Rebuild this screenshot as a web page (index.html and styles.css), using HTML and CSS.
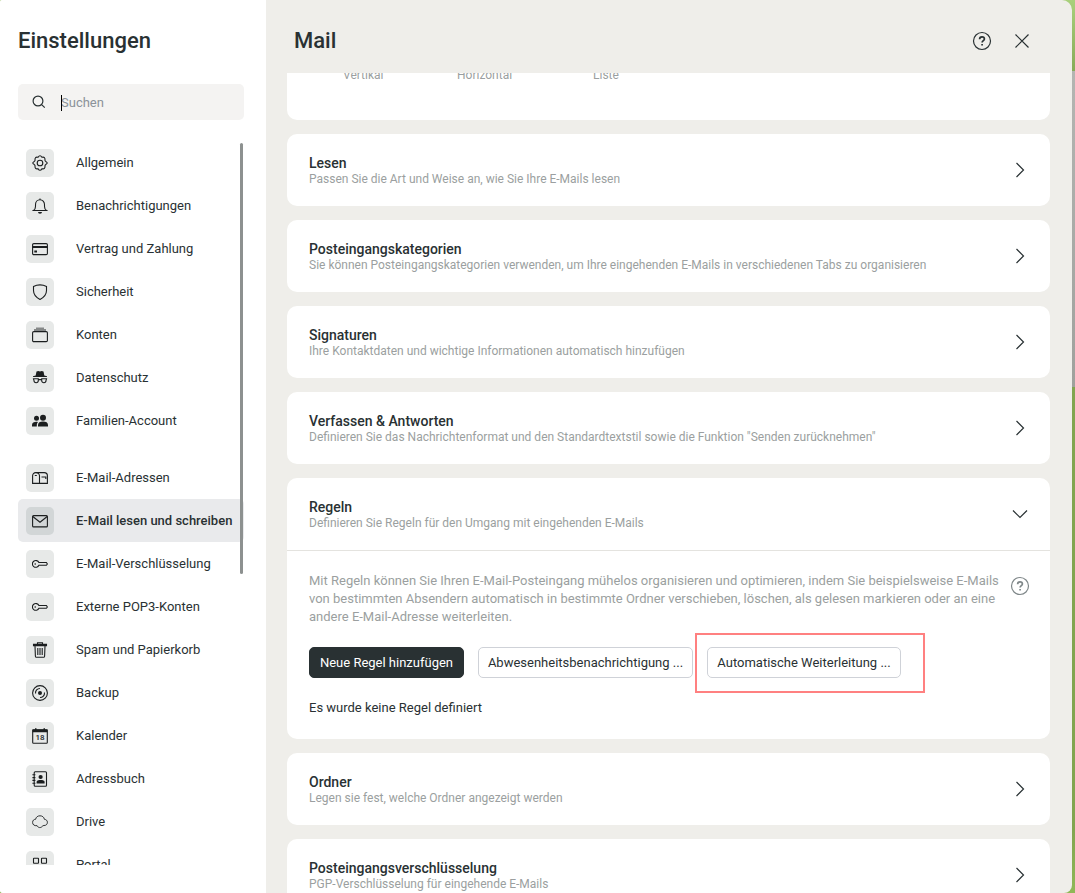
FILE: index.html
```html
<!DOCTYPE html>
<html lang="de">
<head>
    <meta charset="UTF-8">
    <meta name="viewport" content="width=device-width, initial-scale=1.0">
    <title>Einstellungen - Mail</title>
    <link rel="stylesheet" href="styles.css">
</head>
<body>
    <div class="dialog">
        <aside class="sidebar">
            <h1>Einstellungen</h1>
            <div class="search">
                <svg width="14" height="14" viewBox="0 0 14 14"><circle cx="6" cy="6" r="4.900"/><path d="M9.600 9.600l3.200 3"/></svg>
                <span class="caret"></span>
                <input type="text" id="search" placeholder="Suchen" aria-label="Suchen">
            </div>
            <div class="nav-wrap">
                <nav class="nav">
                    <ul>
                        <li><a href="#allgemein"><span class="icon"><svg viewBox="0 0 16 16"><circle cx="8" cy="8" r="2.800"/><path d="M6 2.300Q8-.9 10 2.300q3.300-.8 3 3-.1.400.7 1.100 3 1.600 0 3.200-.8.700-.7 1.100.300 3.800-3 3-2 3.200-4 0-3.300.8-3-3 .1-.4-.7-1.100-3-1.600 0-3.200.8-.7.700-1.100-.300-3.800 3-3z"/></svg></span>Allgemein</a></li>
                        <li><a href="#benachrichtigungen"><span class="icon"><svg viewBox="0 0 16 16"><path d="M1.500 12.500h13c-1.500-1-2-2-2-4V6.500a4.500 4.800 0 0 0-9 0v2c0 2-.5 3-2 4zM8 .5V2"/><path class="fill" d="M6 14h4a2 1.800 0 0 1-4 0z"/></svg></span>Benachrichtigungen</a></li>
                        <li><a href="#vertrag"><span class="icon"><svg viewBox="0 0 16 16"><rect x=".6" y="2.600" width="14.800" height="11" rx="1.200"/><path class="fill" d="M.6 5h14.800v2H.6zM2.300 9.500h2.700v2H2.300z"/></svg></span>Vertrag und Zahlung</a></li>
                        <li><a href="#sicherheit"><span class="icon"><svg viewBox="0 0 16 16"><path d="M8 .9c2.500 0 4.500.5 6.500 1.500v4.100c0 4-2.800 7-6.500 8.900C4.300 13.500 1.500 10.500 1.500 6.500V2.400C3.500 1.400 5.500.9 8 .9z"/></svg></span>Sicherheit</a></li>
                        <li><a href="#konten"><span class="icon"><svg viewBox="0 0 16 16"><path class="soft" d="M4 .5h8V2h2v2.500H2V2h2z"/><rect x=".6" y="4.600" width="14.800" height="10" rx="1.200"/></svg></span>Konten</a></li>
                        <li><a href="#datenschutz"><span class="icon"><svg viewBox="0 0 16 16"><path class="fill" d="M4.500 1.500L6.400 1l1.600.4L9.600 1l1.900.5.8 3.900 2.700.8V7H1v-.8l2.700-.8z"/><path d="M1.500 8.800h4.800v1.700c0 3-4.300 3-4.300 0zM9.700 8.800h4.800l-.5 1.700c0 3-4.300 3-4.300 0zM6.300 9.600h3.400"/></svg></span>Datenschutz</a></li>
                        <li><a href="#familie"><span class="icon"><svg viewBox="0 0 16 16"><g class="fill"><circle cx="4.500" cy="5.200" r="2.500"/><circle cx="11" cy="4.700" r="3"/><path d="M0 13.500V12c0-2.300 2-3.300 4.500-3.300l1.800.3c-1.200.8-1.500 1.500-1.500 4.500zM6 13.500V12c0-2.300 2-3.400 5-3.400s5 1.100 5 3.400v1.500z"/></g></svg></span>Familien-Account</a></li>
                    </ul>
                    <ul>
                        <li><a href="#adressen"><span class="icon"><svg viewBox="0 0 16 16"><path d="M3.800 2.600h8.400c2 0 3.200 1.500 3.200 3.200v7.600H.6V5.800c0-1.700 1.200-3.200 3.200-3.200s3.700 1.500 3.700 3.200v7.600M2.800 5.500h2M9.500 7h4.300v2"/></svg></span>E-Mail-Adressen</a></li>
                        <li><a href="#schreiben" class="active"><span class="icon"><svg viewBox="0 0 16 16"><rect x=".6" y="2.600" width="14.800" height="11.300" rx="1"/><path d="M.8 3.500L8 9.300l7.200-5.800"/></svg></span>E-Mail lesen und schreiben</a></li>
                        <li><a href="#verschluesselung"><span class="icon"><svg viewBox="0 0 16 16"><path d="M6.900 6.500h7.500l1 1.500-1 1.300H6.900a3.400 3.400 0 1 1 0-2.800z"/><circle class="fill" cx="3.200" cy="8" r=".8"/></svg></span>E-Mail-Verschlüsselung</a></li>
                        <li><a href="#pop3"><span class="icon"><svg viewBox="0 0 16 16"><path d="M6.900 6.500h7.500l1 1.500-1 1.300H6.900a3.400 3.400 0 1 1 0-2.800z"/><circle class="fill" cx="3.200" cy="8" r=".8"/></svg></span>Externe POP3-Konten</a></li>
                        <li><a href="#spam"><span class="icon"><svg viewBox="0 0 16 16"><path d="M1.500 3.600V2.400h13v1.200zM5.500 2V.7h5V2M3 4l.4 10.200q.1 1.100 1 1.100h7.200q.9 0 1-1.100L13 4M5.800 6v7M8 6v7M10.200 6v7"/></svg></span>Spam und Papierkorb</a></li>
                        <li><a href="#backup"><span class="icon"><svg viewBox="0 0 16 16"><circle cx="8" cy="8" r="7.400"/><circle class="fill" cx="8" cy="8" r="2"/><path d="M3.500 8.500A4.500 4.500 0 0 1 8 3.500M12.500 7.500a4.500 4.500 0 0 1-4.500 5"/></svg></span>Backup</a></li>
                        <li><a href="#kalender"><span class="icon"><svg viewBox="0 0 16 16"><rect x=".7" y="1.700" width="14.600" height="13.600" rx=".8"/><path class="fill" d="M.5 1.500h15v2.700H.5zM3 .3h1.500v1.500H3zM11.500.3H13v1.500h-1.500z"/><text x="8" y="12.200" text-anchor="middle">18</text></svg></span>Kalender</a></li>
                        <li><a href="#adressbuch"><span class="icon"><svg viewBox="0 0 16 16"><rect x="2.200" y=".7" width="12.300" height="14.600" rx="1"/><path d="M.4 3.800h3M.4 6.600h3M.4 9.400h3M.4 12.200h3"/><g class="fill"><circle cx="8.600" cy="6" r="2.100"/><path d="M4.600 12.500V11c0-1.500 1.800-2 4-2s4 .5 4 2v1.500z"/></g></svg></span>Adressbuch</a></li>
                        <li><a href="#drive"><span class="icon"><svg viewBox="0 0 16 16"><path class="thin" d="M3.600 5.300C4 3 5.800 1.800 8 1.800s4 1.200 4.400 3.500c1.900.2 3 1.400 3 3 0 2-1.400 3.300-3.400 3.200-.8 0-1.200.2-1.700.8-1.500 1.900-4.300 1.600-5.200-.6C2.200 12 .6 10.600.6 8.500s1.200-3.200 3-3.200z"/></svg></span>Drive</a></li>
                        <li><a href="#portal"><span class="icon"><svg viewBox="0 0 16 16"><rect x="1.500" y="1.200" width="5" height="5" rx=".5"/><rect x="9.500" y="1.200" width="5" height="5" rx=".5"/><rect x="1.500" y="9.200" width="5" height="5" rx=".5"/><rect x="9.500" y="9.200" width="5" height="5" rx=".5"/></svg></span>Portal</a></li>
                    </ul>
                </nav>
                <div class="thumb"></div>
            </div>
        </aside>

        <main class="main">
            <header class="header">
                <h2>Mail</h2>
                <button type="button" class="icon-button" aria-label="Hilfe"><svg width="20" height="20" viewBox="0 0 20 20"><circle cx="10" cy="10" r="8.500"/><path class="mark" d="M7.600 8.200c0-1.500 1-2.400 2.400-2.400s2.400.9 2.400 2.200c0 1.600-2.300 1.700-2.300 3.500M10.100 13v1.600"/></svg></button>
                <button type="button" class="icon-button" aria-label="Schließen"><svg width="20" height="20" viewBox="0 0 20 20"><path d="M3.500 3.500l13 13M16.500 3.500l-13 13"/></svg></button>
            </header>
            <div class="content">
                <section class="card views">
                    <span>Vertikal</span>
                    <span>Horizontal</span>
                    <span>Liste</span>
                </section>
                <section class="card">
                    <button type="button" class="card-head">
                        <span class="card-text"><strong>Lesen</strong><small>Passen Sie die Art und Weise an, wie Sie Ihre E-Mails lesen</small></span>
                        <svg width="20" height="20" viewBox="0 0 20 20"><path d="M6.500 3l7 7-7 7"/></svg>
                    </button>
                </section>
                <section class="card">
                    <button type="button" class="card-head">
                        <span class="card-text"><strong>Posteingangskategorien</strong><small>Sie können Posteingangskategorien verwenden, um Ihre eingehenden E-Mails in verschiedenen Tabs zu organisieren</small></span>
                        <svg width="20" height="20" viewBox="0 0 20 20"><path d="M6.500 3l7 7-7 7"/></svg>
                    </button>
                </section>
                <section class="card">
                    <button type="button" class="card-head">
                        <span class="card-text"><strong>Signaturen</strong><small>Ihre Kontaktdaten und wichtige Informationen automatisch hinzufügen</small></span>
                        <svg width="20" height="20" viewBox="0 0 20 20"><path d="M6.500 3l7 7-7 7"/></svg>
                    </button>
                </section>
                <section class="card">
                    <button type="button" class="card-head">
                        <span class="card-text"><strong>Verfassen &amp; Antworten</strong><small>Definieren Sie das Nachrichtenformat und den Standardtextstil sowie die Funktion "Senden zurücknehmen"</small></span>
                        <svg width="20" height="20" viewBox="0 0 20 20"><path d="M6.500 3l7 7-7 7"/></svg>
                    </button>
                </section>
                <section class="card">
                    <button type="button" class="card-head" aria-expanded="true">
                        <span class="card-text"><strong>Regeln</strong><small>Definieren Sie Regeln für den Umgang mit eingehenden E-Mails</small></span>
                        <svg width="20" height="20" viewBox="0 0 20 20"><path d="M3 6.500l7 7 7-7"/></svg>
                    </button>
                    <div class="card-body">
                        <div class="intro">
                            <p>Mit Regeln können Sie Ihren E-Mail-Posteingang mühelos organisieren und optimieren, indem Sie beispielsweise E-Mails von bestimmten Absendern automatisch in bestimmte Ordner verschieben, löschen, als gelesen markieren oder an eine andere E-Mail-Adresse weiterleiten.</p>
                            <button type="button" class="icon-button muted" aria-label="Hilfe zu Regeln"><svg width="20" height="20" viewBox="0 0 20 20"><circle cx="10" cy="10" r="8.500"/><path class="mark" d="M7.600 8.200c0-1.500 1-2.400 2.400-2.400s2.400.9 2.400 2.200c0 1.600-2.300 1.700-2.300 3.500M10.100 13v1.600"/></svg></button>
                        </div>
                        <div class="actions">
                            <button type="button" class="btn primary">Neue Regel hinzufügen</button>
                            <button type="button" class="btn wide">Abwesenheitsbenachrichtigung ...</button>
                            <div class="marked">
                                <button type="button" class="btn medium">Automatische Weiterleitung ...</button>
                            </div>
                        </div>
                        <p class="empty">Es wurde keine Regel definiert</p>
                    </div>
                </section>
                <section class="card">
                    <button type="button" class="card-head">
                        <span class="card-text"><strong>Ordner</strong><small>Legen sie fest, welche Ordner angezeigt werden</small></span>
                        <svg width="20" height="20" viewBox="0 0 20 20"><path d="M6.500 3l7 7-7 7"/></svg>
                    </button>
                </section>
                <section class="card">
                    <button type="button" class="card-head">
                        <span class="card-text"><strong>Posteingangsverschlüsselung</strong><small>PGP-Verschlüsselung für eingehende E-Mails</small></span>
                        <svg width="20" height="20" viewBox="0 0 20 20"><path d="M6.500 3l7 7-7 7"/></svg>
                    </button>
                </section>
            </div>
        </main>
    </div>
</body>
</html>
```
FILE: styles.css
```css
* {
    box-sizing: border-box;
}
body {
    margin: 0;
    height: 100vh;
    overflow: hidden;
    padding-right: 3px;
    font-family: Roboto, "Liberation Sans", sans-serif;
    font-size: 13px;
    color: #293133;
    background: linear-gradient(#a9d07c, #88ab59 71px, #b4b5b2 71px, #9fa19d 387px, #82a550 387px, #82a550 830px, #8fb857);
}
h1, h2, p, ul {
    margin: 0;
    padding: 0;
}
h1, h2 {
    font-size: 22px;
    line-height: 28px;
    font-weight: 500;
}
button, input {
    font: inherit;
    color: inherit;
}
button {
    cursor: pointer;
}
svg {
    display: block;
    flex: none;
    fill: none;
    stroke: #293133;
    stroke-width: 1.2;
}
.dialog {
    display: flex;
    height: 100%;
    overflow: hidden;
    border-radius: 2px 10px 8px 3px;
    background: #efeeea;
}

/* Seitenleiste */
.sidebar {
    display: flex;
    flex-direction: column;
    flex: none;
    width: 266px;
    padding: 27px 22px 28px 18px;
    background: #fff;
}
.search {
    position: relative;
    display: flex;
    align-items: center;
    gap: 15px;
    flex: none;
    height: 36px;
    margin: 29px 0 21px;
    padding-left: 14px;
    border-radius: 5px;
    background: #f4f3f2;
}
.search input {
    width: 100%;
    min-width: 0;
    height: 36px;
    padding: 0;
    border: none;
    outline: none;
    background: none;
}
.search input::placeholder {
    color: #8b9299;
}
.search .caret {
    position: absolute;
    top: 11px;
    left: 43px;
    width: 1px;
    height: 16px;
    background: #000;
}
.nav-wrap {
    position: relative;
    flex: 1;
    min-height: 0;
}
.nav {
    height: 100%;
    overflow: hidden;
}
.nav ul {
    list-style: none;
}
.nav ul + ul {
    margin-top: 14px;
}
.nav a {
    display: flex;
    gap: 22px;
    padding: 8px 8px 7px;
    border-radius: 5px;
    line-height: 28px;
    white-space: nowrap;
    color: inherit;
    text-decoration: none;
}
.nav a.active {
    background: #e9eaec;
    font-weight: 500;
}
.icon {
    display: flex;
    align-items: center;
    justify-content: center;
    flex: none;
    width: 28px;
    height: 28px;
    border-radius: 5px;
    background: #e7e9e8;
}
.active .icon {
    background: #d2d6d7;
}
.icon svg {
    width: 16px;
    height: 16px;
    stroke: #1b1e1f;
    stroke-width: 1.1;
}
.icon .fill {
    fill: #1b1e1f;
    stroke: none;
}
.icon .soft {
    fill: #858888;
    stroke: none;
}
.icon .thin {
    stroke-width: 0.9;
}
.icon text {
    fill: #1b1e1f;
    stroke: none;
    font-size: 8px;
    font-weight: 500;
}
.thumb {
    position: absolute;
    top: 2px;
    right: 1px;
    width: 3px;
    height: 431px;
    border-radius: 2px;
    background: #8d9190;
}

/* Inhalt */
.main {
    display: flex;
    flex-direction: column;
    flex: 1;
    min-width: 0;
}
.header {
    display: flex;
    align-items: center;
    gap: 20px;
    flex: none;
    height: 73px;
    padding: 8px 40px 0 28px;
}
.header h2 {
    flex: 1;
}
.icon-button {
    flex: none;
    padding: 0;
    border: none;
    background: none;
}
.icon-button .mark {
    stroke-width: 1.7;
}
.icon-button.muted svg {
    stroke: #7f8789;
}
.content {
    flex: 1;
    min-height: 0;
    overflow: hidden;
    padding: 0 22px 0 21px;
}
.card {
    margin-bottom: 14px;
    border-radius: 10px;
    background: #fff;
}
.views {
    display: grid;
    grid-template-columns: 114px 136px auto;
    justify-content: start;
    height: 72px;
    margin-top: -25px;
    padding: 18px 56px;
    font-size: 12px;
    line-height: 18px;
    color: #9b9fa0;
}
.card-head {
    display: flex;
    align-items: center;
    justify-content: space-between;
    width: 100%;
    height: 72px;
    padding: 0 20px 0 22px;
    border: none;
    background: none;
    text-align: left;
}
.card-text {
    padding-top: 2px;
}
.card-text strong, .card-text small {
    display: block;
    line-height: 16px;
}
.card-text strong {
    font-size: 14px;
    font-weight: 500;
}
.card-text small {
    font-size: 12px;
    color: #9b9fa0;
}
.card-body {
    padding: 21px 20px 22px 22px;
    border-top: 1px solid #e4e3df;
}
.intro {
    display: flex;
    align-items: flex-start;
    justify-content: space-between;
    gap: 8px;
}
.intro p {
    max-width: 692px;
    line-height: 18px;
    color: #9b9fa0;
}
.intro .icon-button {
    margin-top: 4px;
}
.actions {
    display: flex;
    gap: 14px;
    margin: 21px 0;
}
.btn {
    width: 155px;
    height: 31px;
    padding: 0;
    border: 1px solid #cfd2d8;
    border-radius: 5px;
    background: #fff;
    white-space: nowrap;
}
.btn.primary {
    border-color: #293133;
    background: #293133;
    color: #fff;
}
.btn.wide {
    width: 215px;
}
.btn.medium {
    width: 194px;
}
.marked {
    position: relative;
}
.marked::after {
    content: "";
    position: absolute;
    inset: -14px -24px -15px -12px;
    border: 2px solid #ff8080;
    pointer-events: none;
}
.empty {
    line-height: 18px;
}
```
